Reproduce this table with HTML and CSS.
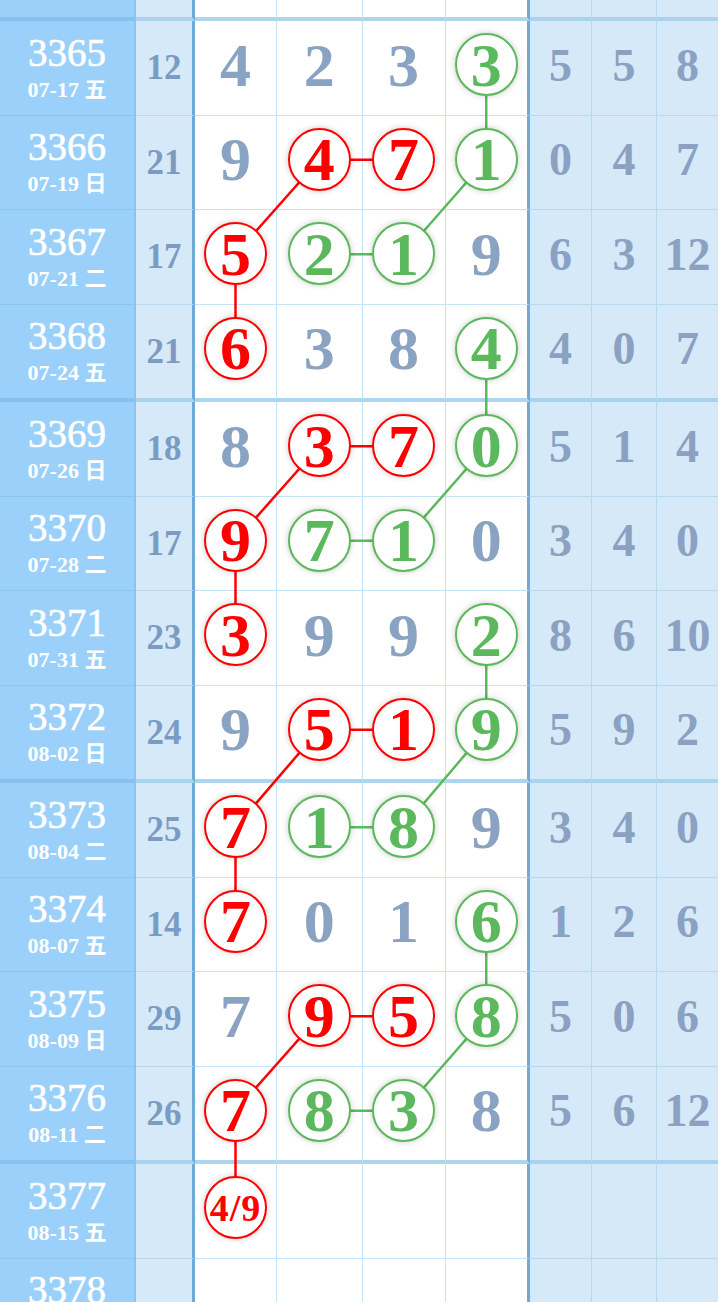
FILE: index.html
```html
<!DOCTYPE html>
<html lang="zh">
<head>
  <meta charset="UTF-8" />
  <title>走势图</title>
  <link rel="stylesheet" href="styles.css">
</head>
<body>
  <div class="board" id="board">
    <svg class="links" id="links"></svg>

    <div class="row end">
      <div class="cell period"><span class="pn">3364</span><span class="pd">07-14 二</span></div>
      <div class="cell sum"></div>
      <div class="cell num"></div><div class="cell num"></div><div class="cell num"></div><div class="cell num last"></div>
      <div class="cell tail"></div><div class="cell tail"></div><div class="cell tail"></div>
    </div>

    <div class="row">
      <div class="cell period"><span class="pn">3365</span><span class="pd">07-17 五</span></div>
      <div class="cell sum">12</div>
      <div class="cell num">4</div>
      <div class="cell num">2</div>
      <div class="cell num">3</div>
      <div class="cell num last"><span class="ball green" data-k="3365-4">3</span></div>
      <div class="cell tail">5</div><div class="cell tail">5</div><div class="cell tail">8</div>
    </div>

    <div class="row">
      <div class="cell period"><span class="pn">3366</span><span class="pd">07-19 日</span></div>
      <div class="cell sum">21</div>
      <div class="cell num">9</div>
      <div class="cell num"><span class="ball red" data-k="3366-2">4</span></div>
      <div class="cell num"><span class="ball red" data-k="3366-3">7</span></div>
      <div class="cell num last"><span class="ball green" data-k="3366-4">1</span></div>
      <div class="cell tail">0</div><div class="cell tail">4</div><div class="cell tail">7</div>
    </div>

    <div class="row">
      <div class="cell period"><span class="pn">3367</span><span class="pd">07-21 二</span></div>
      <div class="cell sum">17</div>
      <div class="cell num"><span class="ball red" data-k="3367-1">5</span></div>
      <div class="cell num"><span class="ball green" data-k="3367-2">2</span></div>
      <div class="cell num"><span class="ball green" data-k="3367-3">1</span></div>
      <div class="cell num last">9</div>
      <div class="cell tail">6</div><div class="cell tail">3</div><div class="cell tail">12</div>
    </div>

    <div class="row end">
      <div class="cell period"><span class="pn">3368</span><span class="pd">07-24 五</span></div>
      <div class="cell sum">21</div>
      <div class="cell num"><span class="ball red" data-k="3368-1">6</span></div>
      <div class="cell num">3</div>
      <div class="cell num">8</div>
      <div class="cell num last"><span class="ball green" data-k="3368-4">4</span></div>
      <div class="cell tail">4</div><div class="cell tail">0</div><div class="cell tail">7</div>
    </div>

    <div class="row">
      <div class="cell period"><span class="pn">3369</span><span class="pd">07-26 日</span></div>
      <div class="cell sum">18</div>
      <div class="cell num">8</div>
      <div class="cell num"><span class="ball red" data-k="3369-2">3</span></div>
      <div class="cell num"><span class="ball red" data-k="3369-3">7</span></div>
      <div class="cell num last"><span class="ball green" data-k="3369-4">0</span></div>
      <div class="cell tail">5</div><div class="cell tail">1</div><div class="cell tail">4</div>
    </div>

    <div class="row">
      <div class="cell period"><span class="pn">3370</span><span class="pd">07-28 二</span></div>
      <div class="cell sum">17</div>
      <div class="cell num"><span class="ball red" data-k="3370-1">9</span></div>
      <div class="cell num"><span class="ball green" data-k="3370-2">7</span></div>
      <div class="cell num"><span class="ball green" data-k="3370-3">1</span></div>
      <div class="cell num last">0</div>
      <div class="cell tail">3</div><div class="cell tail">4</div><div class="cell tail">0</div>
    </div>

    <div class="row">
      <div class="cell period"><span class="pn">3371</span><span class="pd">07-31 五</span></div>
      <div class="cell sum">23</div>
      <div class="cell num"><span class="ball red" data-k="3371-1">3</span></div>
      <div class="cell num">9</div>
      <div class="cell num">9</div>
      <div class="cell num last"><span class="ball green" data-k="3371-4">2</span></div>
      <div class="cell tail">8</div><div class="cell tail">6</div><div class="cell tail">10</div>
    </div>

    <div class="row end">
      <div class="cell period"><span class="pn">3372</span><span class="pd">08-02 日</span></div>
      <div class="cell sum">24</div>
      <div class="cell num">9</div>
      <div class="cell num"><span class="ball red" data-k="3372-2">5</span></div>
      <div class="cell num"><span class="ball red" data-k="3372-3">1</span></div>
      <div class="cell num last"><span class="ball green" data-k="3372-4">9</span></div>
      <div class="cell tail">5</div><div class="cell tail">9</div><div class="cell tail">2</div>
    </div>

    <div class="row">
      <div class="cell period"><span class="pn">3373</span><span class="pd">08-04 二</span></div>
      <div class="cell sum">25</div>
      <div class="cell num"><span class="ball red" data-k="3373-1">7</span></div>
      <div class="cell num"><span class="ball green" data-k="3373-2">1</span></div>
      <div class="cell num"><span class="ball green" data-k="3373-3">8</span></div>
      <div class="cell num last">9</div>
      <div class="cell tail">3</div><div class="cell tail">4</div><div class="cell tail">0</div>
    </div>

    <div class="row">
      <div class="cell period"><span class="pn">3374</span><span class="pd">08-07 五</span></div>
      <div class="cell sum">14</div>
      <div class="cell num"><span class="ball red" data-k="3374-1">7</span></div>
      <div class="cell num">0</div>
      <div class="cell num">1</div>
      <div class="cell num last"><span class="ball green" data-k="3374-4">6</span></div>
      <div class="cell tail">1</div><div class="cell tail">2</div><div class="cell tail">6</div>
    </div>

    <div class="row">
      <div class="cell period"><span class="pn">3375</span><span class="pd">08-09 日</span></div>
      <div class="cell sum">29</div>
      <div class="cell num">7</div>
      <div class="cell num"><span class="ball red" data-k="3375-2">9</span></div>
      <div class="cell num"><span class="ball red" data-k="3375-3">5</span></div>
      <div class="cell num last"><span class="ball green" data-k="3375-4">8</span></div>
      <div class="cell tail">5</div><div class="cell tail">0</div><div class="cell tail">6</div>
    </div>

    <div class="row end">
      <div class="cell period"><span class="pn">3376</span><span class="pd">08-11 二</span></div>
      <div class="cell sum">26</div>
      <div class="cell num"><span class="ball red" data-k="3376-1">7</span></div>
      <div class="cell num"><span class="ball green" data-k="3376-2">8</span></div>
      <div class="cell num"><span class="ball green" data-k="3376-3">3</span></div>
      <div class="cell num last">8</div>
      <div class="cell tail">5</div><div class="cell tail">6</div><div class="cell tail">12</div>
    </div>

    <div class="row">
      <div class="cell period"><span class="pn">3377</span><span class="pd">08-15 五</span></div>
      <div class="cell sum"></div>
      <div class="cell num"><span class="ball red guess" data-k="3377-1">4/9</span></div>
      <div class="cell num"></div>
      <div class="cell num"></div>
      <div class="cell num last"></div>
      <div class="cell tail"></div><div class="cell tail"></div><div class="cell tail"></div>
    </div>

    <div class="row">
      <div class="cell period"><span class="pn">3378</span><span class="pd">08-17 日</span></div>
      <div class="cell sum"></div>
      <div class="cell num"></div><div class="cell num"></div><div class="cell num"></div><div class="cell num last"></div>
      <div class="cell tail"></div><div class="cell tail"></div><div class="cell tail"></div>
    </div>
  </div>

  <script>
    // red = 前区连线, green = 后区连线
    const links = [
      ['#f00', '3366-2', '3366-3'], ['#f00', '3366-2', '3367-1'], ['#f00', '3367-1', '3368-1'],
      ['#f00', '3369-2', '3369-3'], ['#f00', '3369-2', '3370-1'], ['#f00', '3370-1', '3371-1'],
      ['#f00', '3372-2', '3372-3'], ['#f00', '3372-2', '3373-1'], ['#f00', '3373-1', '3374-1'],
      ['#f00', '3375-2', '3375-3'], ['#f00', '3375-2', '3376-1'], ['#f00', '3376-1', '3377-1'],
      ['#5cb85c', '3365-4', '3366-4'], ['#5cb85c', '3366-4', '3367-3'], ['#5cb85c', '3367-3', '3367-2'],
      ['#5cb85c', '3368-4', '3369-4'], ['#5cb85c', '3369-4', '3370-3'], ['#5cb85c', '3370-3', '3370-2'],
      ['#5cb85c', '3371-4', '3372-4'], ['#5cb85c', '3372-4', '3373-3'], ['#5cb85c', '3373-3', '3373-2'],
      ['#5cb85c', '3374-4', '3375-4'], ['#5cb85c', '3375-4', '3376-3'], ['#5cb85c', '3376-3', '3376-2']
    ];

    function drawLinks() {
      const board = document.getElementById('board');
      const svg = document.getElementById('links');
      const box = board.getBoundingClientRect();
      svg.setAttribute('width', box.width);
      svg.setAttribute('height', box.height);

      function center(key) {
        const r = document.querySelector('[data-k="' + key + '"]').getBoundingClientRect();
        return [r.left + r.width / 2 - box.left, r.top + r.height / 2 - box.top];
      }

      links.forEach(([color, a, b]) => {
        const p = center(a);
        const q = center(b);
        const line = document.createElementNS('http://www.w3.org/2000/svg', 'line');
        line.setAttribute('x1', p[0]);
        line.setAttribute('y1', p[1]);
        line.setAttribute('x2', q[0]);
        line.setAttribute('y2', q[1]);
        line.setAttribute('stroke', color);
        line.setAttribute('stroke-width', '2.5');
        svg.appendChild(line);
      });
    }

    drawLinks();
  </script>
</body>
</html>
```

FILE: styles.css
```css
body {
  margin: 0;
  font-family: "Liberation Serif", "Noto Sans CJK SC", serif;
  background: #fff;
  overflow: hidden;
}

.board {
  position: relative;
  width: 718px;
  margin-top: -76.5px;
}

.links {
  position: absolute;
  left: 0;
  top: 0;
  z-index: 1;
  pointer-events: none;
}

.row {
  display: grid;
  grid-template-columns: 136px 59px 82px 85.5px 83px 84.5px 62px 65px 61px;
}

.cell {
  box-sizing: border-box;
  height: 94.5px;
  border-bottom: 1px solid #c6e3f4;
  border-right: 1px solid #c6e3f4;
  display: flex;
  align-items: center;
  justify-content: center;
  line-height: 1;
  font-weight: bold;
}

.end .cell {
  height: 97.5px;
  border-bottom-width: 4px;
  border-bottom-color: #acd5ee;
}

.period {
  flex-direction: column;
  background: #9bd0fb;
  color: #fff;
  border-right: 2px solid #8bc4ee;
  border-bottom-color: #8bc5ee;
}

.end .period {
  border-bottom-color: #88c2ec;
}

.pn {
  font-size: 39px;
  line-height: 38px;
  font-weight: normal;
  -webkit-text-stroke: 0.6px #fff;
}

.pd {
  font-size: 22px;
  line-height: 24px;
  margin-top: 6px;
}

.sum {
  background: #d6e9f9;
  color: #7b9bc3;
  font-size: 35px;
  border-right: 3px solid #70a9d3;
  border-bottom-color: #b5d9f0;
}

.num {
  background: #fff;
  color: #8aa3c3;
  font-size: 62px;
  padding-bottom: 6px;
}

.num.last {
  border-right: 3px solid #70a9d3;
}

.tail {
  background: #d6e9f9;
  color: #8aa1c1;
  font-size: 46px;
  padding-bottom: 4px;
  border-right-color: #b5d9f0;
  border-bottom-color: #b5d9f0;
}

.end .sum,
.end .tail {
  border-bottom-color: #a9d2ec;
}

.tail:last-child {
  border-right: none;
}

.ball {
  box-sizing: border-box;
  width: 63px;
  height: 63px;
  border-radius: 50%;
  border: 2.5px solid;
  background: #fff;
  display: flex;
  align-items: center;
  justify-content: center;
  position: relative;
  z-index: 2;
  box-shadow: 0 0 6px rgba(0, 0, 0, 0.22);
}

.ball.red {
  color: #f00;
  border-color: #f00;
}

.ball.green {
  color: #5cb85c;
  border-color: #5cb85c;
}

.ball.guess {
  font-size: 38px;
  letter-spacing: 1px;
}
```
